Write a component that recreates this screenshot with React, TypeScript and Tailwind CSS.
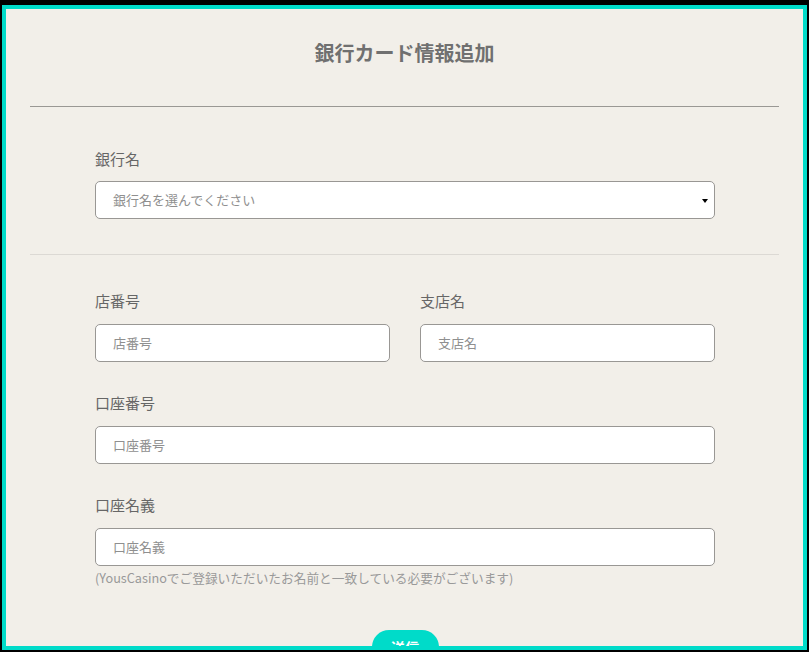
import React from "react";

const font = { fontFamily: '"Noto Sans CJK JP", "Noto Sans", sans-serif' };

function Label({ children }: { children: React.ReactNode }) {
  return <div className="h-[22px] text-[15px] leading-[22px] text-[#666666]">{children}</div>;
}

function Field({ placeholder }: { placeholder: string }) {
  return (
    <div className="mt-[12px] flex h-[38px] items-center rounded-[5px] border border-[#999794] bg-white px-[17px] text-[13px] text-[#8f8f8f]">
      {placeholder}
    </div>
  );
}

export default function App() {
  return (
    <div className="h-[652px] w-[809px] bg-black pt-[5px] px-[2px] pb-[2px]" style={font}>
      <div className="h-full w-full overflow-hidden border-4 border-[#00dbc9] bg-[#f2efe9]">
        <div className="pt-[30px] text-center text-[20px] font-bold leading-[28px] text-[#707070]">
          銀行カード情報追加
        </div>
        <div className="mx-[24px] mt-[39px] h-px bg-[#9a9894]" />
        <div className="mx-[24px] pl-[65px] pr-[64px] pt-[41px]">
          <Label>銀行名</Label>
          <div className="relative mt-[11px] flex h-[38px] items-center rounded-[5px] border border-[#999794] bg-white px-[17px] text-[13px] text-[#8f8f8f]">
            銀行名を選んでください
            <span className="absolute right-[6px] top-[17px] h-0 w-0 border-x-[3.5px] border-t-[4px] border-x-transparent border-t-black" />
          </div>
        </div>
        <div className="mx-[24px] mt-[35px] h-px bg-[#dcd9d4]" />
        <div className="mx-[24px] pl-[65px] pr-[64px] pt-[35px]">
          <div className="grid grid-cols-2 gap-[30px]">
            <div>
              <Label>店番号</Label>
              <Field placeholder="店番号" />
            </div>
            <div>
              <Label>支店名</Label>
              <Field placeholder="支店名" />
            </div>
          </div>
          <div className="mt-[30px]">
            <Label>口座番号</Label>
            <Field placeholder="口座番号" />
          </div>
          <div className="mt-[30px]">
            <Label>口座名義</Label>
            <Field placeholder="口座名義" />
            <div className="mt-[4px] text-[12.7px] leading-[16px] text-[#999999]">
              (YousCasinoでご登録いただいたお名前と一致している必要がございます)
            </div>
          </div>
          <div className="mt-[44px] flex justify-center">
            <button className="flex h-[34px] w-[67px] items-center justify-center rounded-full bg-[#00dbc9] text-[14px] font-bold text-white">
              送信
            </button>
          </div>
        </div>
      </div>
    </div>
  );
}
